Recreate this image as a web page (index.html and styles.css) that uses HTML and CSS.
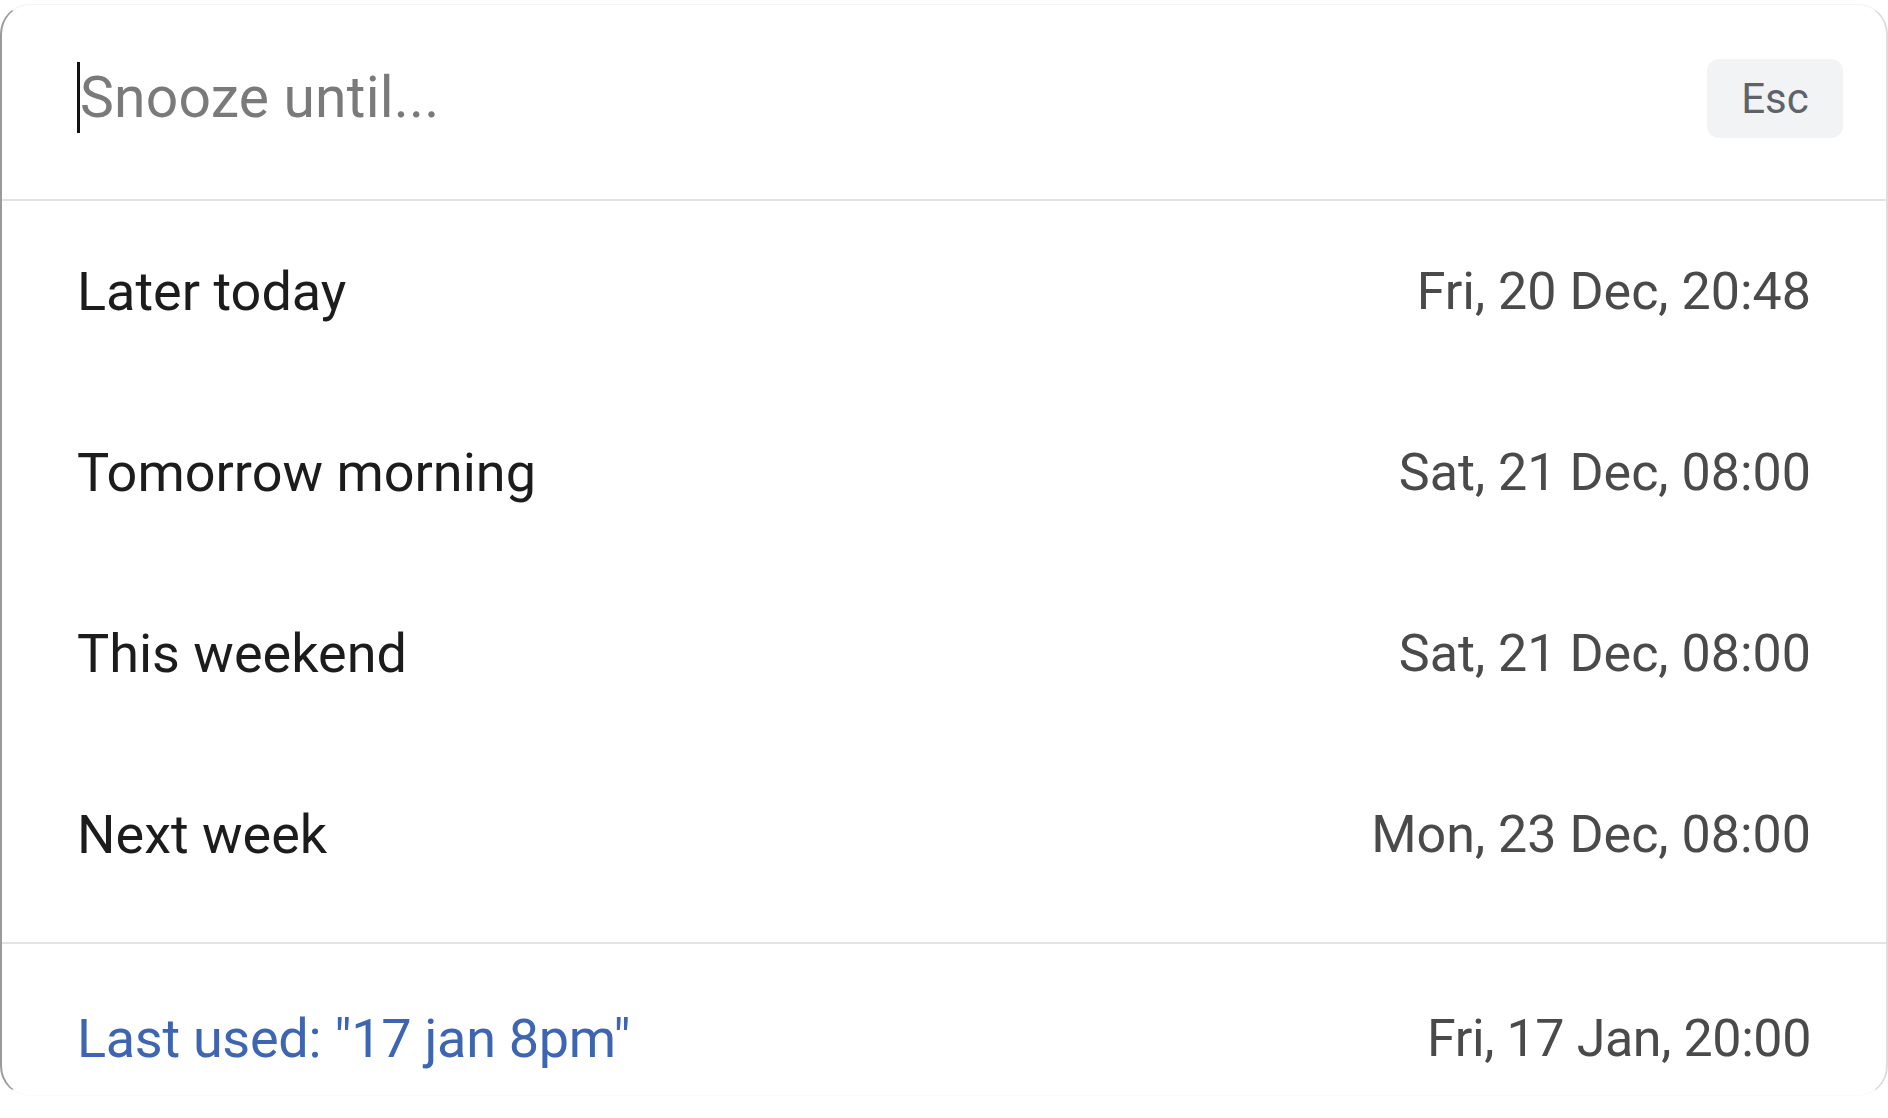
FILE: index.html
```html
<!DOCTYPE html>
<html lang="en">
<head>
<meta charset="utf-8">
<title>Snooze</title>
<link rel="stylesheet" href="styles.css">
</head>
<body>
<div class="dialog">
  <div class="header">
    <div class="search">
      <span class="caret"></span>
      <span class="placeholder">Snooze until...</span>
    </div>
    <span class="esc">Esc</span>
  </div>
  <ul class="options">
    <li class="option"><span class="label">Later today</span><span class="when">Fri, 20 Dec, 20:48</span></li>
    <li class="option"><span class="label">Tomorrow morning</span><span class="when">Sat, 21 Dec, 08:00</span></li>
    <li class="option"><span class="label">This weekend</span><span class="when">Sat, 21 Dec, 08:00</span></li>
    <li class="option"><span class="label">Next week</span><span class="when">Mon, 23 Dec, 08:00</span></li>
  </ul>
  <div class="footer">
    <span class="label last">Last used: "17 jan 8pm"</span><span class="when">Fri, 17 Jan, 20:00</span>
  </div>
</div>
</body>
</html>
```
FILE: styles.css
```css
html, body {
  margin: 0;
  padding: 0;
  background: #ffffff;
}
body {
  padding-top: 4px;
  font-family: Roboto, "Noto Sans", "Liberation Sans", sans-serif;
}
.dialog {
  box-sizing: border-box;
  width: 1888px;
  height: 1092px;
  background: #ffffff;
  border: 1px solid #f4f4f4;
  border-left: 2px solid #9a9a9a;
  border-right: 2px solid #dcdcdc;
  border-bottom-color: #fafafa;
  border-radius: 30px;
  display: flex;
  flex-direction: column;
}
.header {
  height: 196px;
  box-sizing: border-box;
  padding: 0 43px 10px 75px;
  display: flex;
  align-items: center;
  justify-content: space-between;
  border-bottom: 2px solid #e3e3e3;
}
.search {
  display: flex;
  align-items: center;
}
.caret {
  width: 3px;
  height: 71px;
  background: #111111;
}
.placeholder {
  font-size: 57px;
  color: #7a7a7a;
  letter-spacing: 0.2px;
}
.esc {
  width: 136px;
  height: 79px;
  margin-top: 2px;
  border-radius: 12px;
  background: #f2f3f4;
  color: #5f6368;
  font-size: 42px;
  display: flex;
  align-items: center;
  justify-content: center;
}
.options {
  list-style: none;
  margin: 0;
  padding: 0 0 17px;
  border-bottom: 2px solid #e3e3e3;
}
.option {
  height: 181px;
  box-sizing: border-box;
  padding: 0 75px;
  display: flex;
  align-items: center;
  justify-content: space-between;
}
.label {
  font-size: 54px;
  color: #1c1c1c;
}
.when {
  font-size: 52px;
  color: #4a4a4a;
}
.footer {
  flex: 1;
  box-sizing: border-box;
  padding: 38px 75px 0;
  display: flex;
  align-items: center;
  justify-content: space-between;
}
.footer .when {
  letter-spacing: -0.4px;
}
.label.last {
  color: #3d65b2;
  letter-spacing: -0.3px;
}
```
